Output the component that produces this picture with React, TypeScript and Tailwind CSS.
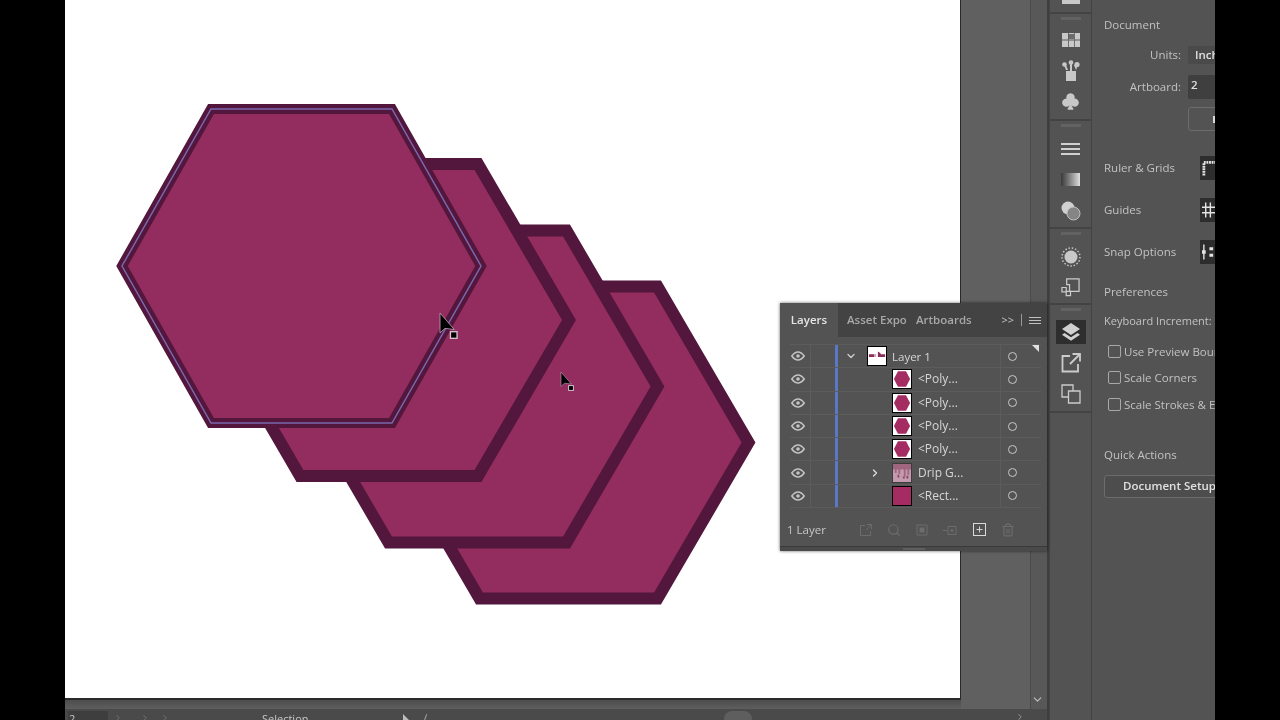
import { BsSuitClubFill } from "react-icons/bs";
import { ChevronDown, ChevronRight, Trash2, Search, Plus } from "lucide-react";

const font = { fontFamily: '"Open Sans", "Liberation Sans", sans-serif' };

// corners are given from the centre of the hexagon
const hexPoints = (cx: number, cy: number, corner: number, tip: number, h: number) =>
  [
    [cx - corner, cy - h],
    [cx + corner, cy - h],
    [cx + tip, cy],
    [cx + corner, cy + h],
    [cx - corner, cy + h],
    [cx - tip, cy],
  ]
    .map(([x, y]) => `${x},${y}`)
    .join(" ");

const BackHex = ({ cx, cy }: { cx: number; cy: number }) => (
  <polygon
    points={hexPoints(cx, cy, 89, 180, 156)}
    fill="#932d5f"
    stroke="#53163c"
    strokeWidth="12"
    strokeLinejoin="miter"
  />
);

const Cursor = ({ x, y, s }: { x: number; y: number; s: number }) => (
  <g transform={`translate(${x} ${y}) scale(${s})`}>
    <path d="M0 0 L0 18 L4.5 14 L13 15 Z" fill="#000" stroke="#b79ab0" strokeWidth="0.8" />
    <rect x="9.5" y="17" width="6" height="6" fill="#000" stroke="#d8c4d2" strokeWidth="1.2" />
  </g>
);

const Artwork = () => (
  <svg viewBox="65 0 895 698" className="block h-full w-full">
    <BackHex cx={568.5} cy={442.5} />
    <BackHex cx={477.5} cy={386.5} />
    <BackHex cx={389} cy={320} />
    <polygon
      points={hexPoints(301.5, 266, 90.5, 179.5, 157)}
      fill="#932d5f"
      stroke="#53163c"
      strokeWidth="10"
    />
    <polygon points={hexPoints(301.5, 266, 90.5, 179.5, 157)} fill="none" stroke="#7a68ad" strokeWidth="1.5" />
    <Cursor x={440} y={313} s={1.1} />
    <Cursor x={561} y={372} s={0.8} />
  </svg>
);

const EyeIcon = () => (
  <svg viewBox="0 0 14 10" className="h-[10px] w-[14px]" fill="none">
    <path d="M.8 5C3 2 5 1 7 1s4 1 6.200 4C11 8 9 9 7 9S3 8 .8 5z" stroke="#c4c4c4" strokeWidth="1.500" />
    <circle cx="7" cy="5" r="1.800" fill="#c4c4c4" />
  </svg>
);

const HexThumb = () => (
  <svg viewBox="0 0 20 20" className="h-5 w-5 border border-black bg-white">
    <polygon points="5.5,1.500 14.5,1.500 19,10 14.5,18.500 5.5,18.500 1,10" fill="#a52c63" />
  </svg>
);

const LayerThumb = () => (
  <svg viewBox="0 0 20 20" className="h-5 w-5 border border-black bg-white">
    <path d="M1 8h6v3H1zM11 5l3 2v1h5v3h-8z" fill="#8a2c5c" />
    <path d="M7 8h2v3H7z" fill="#c7a0b4" />
  </svg>
);

const DripThumb = () => (
  <svg viewBox="0 0 20 20" className="h-5 w-5 border border-[#3c3c3c] bg-[#c49aae]">
    <path d="M0 0h20v6h-2v6h-2V6h-2v8h-2V6H8v5H6V6H4v4H2V6H0z" fill="#a06680" />
    <path d="M5 12h2v3H5zM11 14h2v2h-2zM15 13h2v3h-2z" fill="#8a4467" />
  </svg>
);

const RectThumb = () => <div className="h-5 w-5 border border-black bg-[#a52c63]" />;

const rows = [
  { name: "<Poly...", thumb: <HexThumb /> },
  { name: "<Poly...", thumb: <HexThumb /> },
  { name: "<Poly...", thumb: <HexThumb /> },
  { name: "<Poly...", thumb: <HexThumb /> },
  { name: "Drip G...", thumb: <DripThumb />, expand: true },
  { name: "<Rect...", thumb: <RectThumb /> },
];

const LayerRow = ({ children }: { children: React.ReactNode }) => (
  <div className="flex h-[23.3px] items-center border-b border-[#5c5c5c] text-[11.5px] text-[#d6d6d6]">
    <div className="flex h-full w-[16px] shrink-0 items-center justify-center">
      <EyeIcon />
    </div>
    <div className="ml-[4px] h-full w-[29px] shrink-0 border-l border-[#5c5c5c]" />
    <div className="ml-[-4px] h-full w-[3px] shrink-0 bg-[#5a77c8]" />
    {children}
    <div className="flex h-full w-[41px] shrink-0 items-center border-l border-[#5c5c5c] pl-[7px]">
      <div className="h-[9px] w-[9px] rounded-full border border-[#c8c8c8]" />
    </div>
  </div>
);

const LayersPanel = () => (
  <div className="absolute left-[715px] top-[303px] flex h-[248px] w-[267px] flex-col bg-[#535353] shadow-[0_0_3px_rgba(0,0,0,0.6)]">
    <div className="flex h-[34px] shrink-0 items-center bg-[#434343] text-[11.5px] font-semibold text-[#a8a8a8]">
      <div className="flex h-full w-[58px] items-center justify-center bg-[#535353] text-[#e4e4e4]">Layers</div>
      <div className="ml-[9px] w-[59px] overflow-hidden whitespace-nowrap">Asset Export</div>
      <div className="ml-[10px]">Artboards</div>
      <div className="ml-auto flex items-center gap-[7px] pr-[6px] text-[#b4b4b4]">
        <span className="text-[11px]">&gt;&gt;</span>
        <span className="h-[12px] w-px bg-[#9a9a9a]" />
        <span className="flex w-[12px] flex-col gap-[2px]">
          <span className="h-px bg-[#c0c0c0]" />
          <span className="h-px bg-[#c0c0c0]" />
          <span className="h-px bg-[#c0c0c0]" />
        </span>
      </div>
    </div>
    <div className="relative ml-[10px] mr-[6px] mt-[7px] border-t border-[#5c5c5c]">
      <div className="absolute right-[2px] top-0 h-0 w-0 border-l-[7px] border-t-[7px] border-l-transparent border-t-[#e0e0e0]" />
      <LayerRow>
        <div className="flex w-[29px] shrink-0 justify-center pr-[3px]">
          <ChevronDown size={12} strokeWidth={2.5} className="text-[#d0d0d0]" />
        </div>
        <LayerThumb />
        <span className="ml-[5px] flex-1 whitespace-nowrap">Layer 1</span>
      </LayerRow>
      {rows.map((row, i) => (
        <LayerRow key={i}>
          <div className="flex w-[54px] shrink-0 justify-end pr-[11px]">
            {row.expand && <ChevronRight size={12} strokeWidth={2.5} className="text-[#e0e0e0]" />}
          </div>
          {row.thumb}
          <span className="ml-[6px] flex-1 whitespace-nowrap text-[12px]">{row.name}</span>
        </LayerRow>
      ))}
    </div>
    <div className="mt-[13px] flex items-center px-[7px] text-[11.5px] text-[#c8c8c8]">
      <span className="w-[72px]">1 Layer</span>
      <div className="flex items-center gap-[14px] text-[#6c6c6c]">
        <svg viewBox="0 0 14 14" className="h-[14px] w-[14px]" fill="none" stroke="currentColor">
          <path d="M6 2.500H1.500v10h10V8M8 1.500h4.500V6M12 2l-5 5" />
        </svg>
        <Search size={14} />
        <svg viewBox="0 0 14 14" className="h-[14px] w-[14px]" fill="currentColor">
          <path d="M2 2h10v10H2z" fill="none" stroke="currentColor" />
          <path d="M4.500 4.500h5v5h-5z" />
        </svg>
        <svg viewBox="0 0 14 14" className="h-[14px] w-[14px]" fill="none" stroke="currentColor">
          <path d="M5 3.500h8v8H5zM9 5.500v4M7 7.500h4M0 7.500h4" />
        </svg>
        <div className="ml-[2px] flex h-[13px] w-[13px] items-center justify-center border border-[#dadada]">
          <Plus size={9} strokeWidth={2.5} className="text-[#dadada]" />
        </div>
        <Trash2 size={14} className="ml-[1px]" />
      </div>
    </div>
    <div className="mt-auto flex h-[5px] justify-center border-t border-[#3a3a3a] bg-[#4a4a4a]">
      <div className="mt-px h-[2px] w-[22px] bg-[#5e5e5e]" />
    </div>
  </div>
);

const ToolSlot = ({ children, active }: { children: React.ReactNode; active?: boolean }) => (
  <div className="flex h-[31px] w-[30px] items-center justify-center">
    <div className={`flex h-[24px] w-[30px] items-center justify-center ${active ? "bg-[#2e2e2e]" : ""}`}>
      {children}
    </div>
  </div>
);

const Grip = () => <div className="mx-auto mb-[2px] mt-[3px] h-[3px] w-[20px] bg-[#626262]" />;

const ToolGroup = ({ children, height }: { children: React.ReactNode; height: string }) => (
  <div className={`flex flex-col items-center border-b-2 border-[#434343] ${height}`}>{children}</div>
);

const Toolbar = () => (
  <div className="flex w-[43px] shrink-0 flex-col border-x border-[#434343] bg-[#535353] text-[#c8c8c8]">
    <div className="h-[14px] shrink-0 overflow-hidden border-b-2 border-[#434343]">
      <div className="mx-auto mt-[-8px] h-[12px] w-[18px] bg-[#c8c8c8]" />
    </div>
    <ToolGroup height="h-[107px]">
      <Grip />
      <div className="mt-[2px]" />
      <ToolSlot>
        <svg viewBox="0 0 18 14" className="h-[14px] w-[18px]">
          <path d="M0 0h18v14H0z" fill="#c8c8c8" />
          <path d="M6 1h6v5H6z" fill="#6b6b6b" />
          <path d="M0 6.500h18v1H0zM6 0h.8v14H6zM12 0h.8v14H12z" fill="#5a5a5a" />
        </svg>
      </ToolSlot>
      <ToolSlot>
        <svg viewBox="0 0 18 22" className="h-[22px] w-[18px]" fill="#c8c8c8">
          <path d="M4 11h10v10H4z" />
          <path d="M8 11V3h2v8zM4 10 2 5h2l2 5zM14 10l-2-5h2.500l1 1-1.500 4z" />
          <circle cx="2.500" cy="4.500" r="2.300" />
          <circle cx="9" cy="2.500" r="2.300" />
          <circle cx="15" cy="4.500" r="2.600" />
        </svg>
      </ToolSlot>
      <ToolSlot>
        <BsSuitClubFill size={19} />
      </ToolSlot>
    </ToolGroup>
    <ToolGroup height="h-[108px]">
      <Grip />
      <div className="mt-[4px]" />
      <ToolSlot>
        <div className="flex w-[19px] flex-col gap-[3px]">
          <div className="h-[2px] bg-[#d0d0d0]" />
          <div className="h-[2px] bg-[#d0d0d0]" />
          <div className="h-[2px] bg-[#d0d0d0]" />
        </div>
      </ToolSlot>
      <ToolSlot>
        <div className="h-[13px] w-[19px] bg-gradient-to-r from-[#3a3a3a] to-[#e0e0e0]" />
      </ToolSlot>
      <ToolSlot>
        <svg viewBox="0 0 20 20" className="h-[20px] w-[20px]">
          <circle cx="7" cy="7" r="6.500" fill="#d0d0d0" />
          <circle cx="12.500" cy="12.500" r="6.500" fill="#858585" stroke="#c0c0c0" />
        </svg>
      </ToolSlot>
    </ToolGroup>
    <ToolGroup height="h-[76px]">
      <Grip />
      <div className="mt-[5px]" />
      <ToolSlot>
        <svg viewBox="0 0 20 20" className="h-[20px] w-[20px]">
          <circle cx="10" cy="10" r="6.500" fill="#c8c8c8" />
          <circle cx="10" cy="10" r="9" fill="none" stroke="#c8c8c8" strokeWidth="1.500" strokeDasharray="1.500 1.800" />
        </svg>
      </ToolSlot>
      <ToolSlot>
        <svg viewBox="0 0 20 20" className="h-[19px] w-[19px]" fill="none" stroke="#cccccc" strokeWidth="1.300">
          <path d="M6 1h13v13H9V7H6z" />
          <path d="M1 10h4.500v4.500H1zM5.500 14h4.500v4.500H5.500z" />
        </svg>
      </ToolSlot>
    </ToolGroup>
    <ToolGroup height="h-[108px]">
      <Grip />
      <div className="mt-[3px]" />
      <ToolSlot active>
        <svg viewBox="0 0 20 20" className="h-[20px] w-[20px]" fill="#d0d0d0">
          <path d="M10 1 19 7l-9 6-9-6z" />
          <path d="m3.500 11 6.500 4.300 6.500-4.300 2.500 1.700-9 6-9-6z" />
        </svg>
      </ToolSlot>
      <ToolSlot>
        <svg viewBox="0 0 20 20" className="h-[20px] w-[20px]" fill="none" stroke="#cccccc" strokeWidth="1.800">
          <path d="M9 3H1.500v15.500H17V11M11.500 1H19v7.500M18.500 1.500 9 11" />
        </svg>
      </ToolSlot>
      <ToolSlot>
        <svg viewBox="0 0 20 20" className="h-[20px] w-[20px]" fill="none" stroke="#cccccc" strokeWidth="1.300">
          <path d="M1 1h11v6H7.500v6H1zM7.500 7H19v12H7.500z" />
        </svg>
      </ToolSlot>
    </ToolGroup>
  </div>
);

const SideLabel = ({ label, icon }: { label: string; icon: React.ReactNode }) => (
  <div className="flex h-[42px] items-center justify-between">
    <span>{label}</span>
    <div className="flex h-[24px] w-[15px] items-center overflow-hidden bg-[#2d2d2d] pl-[2px]">{icon}</div>
  </div>
);

const Check = ({ label }: { label: string }) => (
  <div className="flex h-[26.500px] items-center gap-[3px] whitespace-nowrap pl-[4px]">
    <div className="h-[13px] w-[13px] shrink-0 rounded-[2px] border border-[#a8a8a8]" />
    <span>{label}</span>
  </div>
);

const Properties = () => (
  <div className="flex w-[123px] shrink-0 flex-col overflow-hidden bg-[#535353] pl-[12px] text-[11.5px] text-[#c2c2c2]">
    <div className="mt-[16px] h-[18px]">Document</div>
    <div className="mt-[9px] flex h-[24px] items-center justify-end gap-[7px] whitespace-nowrap">
      <span>Units:</span>
      <div className="w-[27px] overflow-hidden rounded-l-[2px] bg-[#4a4a4a] pl-[7px] font-semibold text-[#e0e0e0]">Inches</div>
    </div>
    <div className="mt-[8px] flex h-[24px] items-center justify-end gap-[7px] whitespace-nowrap">
      <span>Artboard:</span>
      <div className="h-full w-[27px] rounded-l-[2px] bg-[#3f3f3f] pl-[3px] font-semibold leading-[20px] text-[#e0e0e0]">2</div>
    </div>
    <div className="ml-[84px] mt-[8px] flex h-[24px] w-[40px] items-center rounded-l-[3px] border border-[#6c6c6c] pl-[24px]">
      <div className="h-[7px] w-[3px] bg-[#d8d8d8]" />
    </div>
    <div className="mt-[16px]">
      <SideLabel
        label="Ruler & Grids"
        icon={
          <svg viewBox="0 0 14 16" className="h-[16px] w-[13px] shrink-0" fill="none" stroke="#e4e4e4" strokeWidth="3">
            <path d="M2 16V2h12" strokeDasharray="2 .8" />
          </svg>
        }
      />
      <SideLabel
        label="Guides"
        icon={
          <svg viewBox="0 0 14 16" className="h-[16px] w-[13px] shrink-0" stroke="#e4e4e4" strokeWidth="1.500">
            <path d="M4 0v16M9 0v16M0 5h14M0 11h14" />
          </svg>
        }
      />
      <SideLabel
        label="Snap Options"
        icon={
          <svg viewBox="0 0 14 16" className="h-[16px] w-[13px] shrink-0" stroke="#e4e4e4" strokeWidth="1.500">
            <path d="M2 0v16" />
            <path d="M0 6h4v4H0zM8 3h4v3H8zM8 10h4v3H8z" fill="#e4e4e4" stroke="none" />
          </svg>
        }
      />
    </div>
    <div className="mt-[10px] h-[20px]">Preferences</div>
    <div className="mt-[10px] h-[20px] whitespace-nowrap text-[11px]">Keyboard Increment:</div>
    <div className="mt-[5px]">
      <Check label="Use Preview Bounds" />
      <Check label="Scale Corners" />
      <Check label="Scale Strokes & Effects" />
    </div>
    <div className="mt-[28px] h-[20px]">Quick Actions</div>
    <div className="mt-[9px] flex h-[23px] w-[131px] shrink-0 items-center justify-center rounded-[3px] border border-[#6c6c6c] bg-[#4d4d4d] font-semibold text-[#e0e0e0]">
      Document Setup
    </div>
  </div>
);

const BottomBar = () => (
  <div className="flex h-[11px] shrink-0 items-start overflow-hidden bg-[#4a4a4a] pl-[3px] text-[11px] leading-[14px] text-[#c8c8c8]">
    <div className="mt-[2px] h-[9px] w-[40px] shrink-0 bg-[#3e3e3e] pl-[1px] pt-[1px]">2</div>
    <ChevronRight size={10} className="ml-[5px] mt-[4px] shrink-0 text-[#777]" />
    <ChevronRight size={10} className="ml-[17px] mt-[4px] shrink-0 text-[#777]" />
    <ChevronRight size={10} className="ml-[10px] mt-[4px] shrink-0 text-[#777]" />
    <span className="ml-[92px] mt-[3px] w-[46px] shrink-0 whitespace-nowrap">Selection</span>
    <svg viewBox="0 0 9 12" className="ml-[95px] mt-[5px] h-[12px] w-[9px] shrink-0" fill="#bdbdbd">
      <path d="M0 0v12l3-3 6 0z" />
    </svg>
    <span className="ml-[13px] mt-[5px] h-[7px] w-px shrink-0 rotate-[20deg] bg-[#a0a0a0]" />
    <div className="ml-[298px] mt-[2px] h-[16px] w-[28px] shrink-0 rounded-full bg-[#5e5e5e]" />
    <ChevronRight size={10} className="ml-[263px] mt-[3px] shrink-0 text-[#aaa]" />
  </div>
);

export default function App() {
  return (
    <div className="flex h-[720px] w-[1280px] overflow-hidden bg-black pl-[65px] pr-[65px] blur-[0.4px]" style={font}>
      <div className="relative flex w-[982px] shrink-0 flex-col">
        <div className="flex h-[709px] shrink-0">
          <div className="flex w-[896px] shrink-0 flex-col">
            <div className="h-[700px] shrink-0 border-b-2 border-r border-[#2a2a2a] bg-white">
              <Artwork />
            </div>
            <div className="flex-1 bg-gradient-to-b from-[#4d4d4d] to-[#5e5e5e]" />
          </div>
          <div className="flex-1 bg-[#606060]" />
          <div className="flex w-[17px] shrink-0 flex-col justify-end border-l border-[#4a4a4a] bg-[#585858] pb-[3px]">
            <ChevronDown size={13} className="mx-auto -translate-x-[2px] text-[#c0c0c0]" />
          </div>
        </div>
        <BottomBar />
        <LayersPanel />
      </div>
      <div className="w-[2px] shrink-0 bg-[#3e3e3e]" />
      <Toolbar />
      <Properties />
    </div>
  );
}
